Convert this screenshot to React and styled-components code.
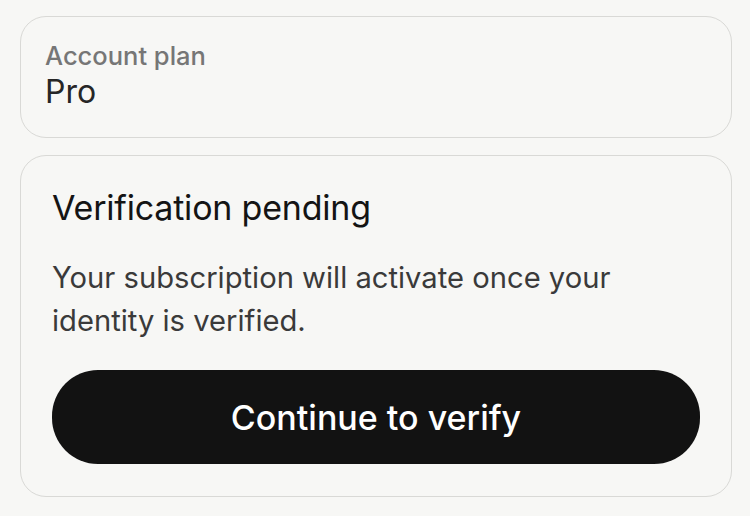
import styled, { createGlobalStyle } from "styled-components";

const GlobalStyle = createGlobalStyle`
  body {
    margin: 0;
    background: #f7f7f5;
    font-family: Inter, "Noto Sans", sans-serif;
  }
`;

const Page = styled.div`
  display: flex;
  flex-direction: column;
  gap: 17px;
  padding: 16px 18px 20px 20px;
`;

const Card = styled.div`
  border: 1px solid #d9d9d6;
  border-radius: 26px;
  background: #f7f7f5;
  padding: ${({ $padding }) => $padding};
  display: flex;
  flex-direction: column;
`;

const Label = styled.div`
  font-size: 25.5px;
  line-height: 30px;
  color: #767676;
  font-weight: 500;
`;

const Value = styled.div`
  font-size: 32px;
  line-height: 42px;
  color: #262626;
`;

const Title = styled.h2`
  margin: 0;
  font-size: 34px;
  font-weight: 400;
  line-height: 40px;
  color: #141414;
  letter-spacing: -0.2px;
`;

const Body = styled.p`
  margin: 28px 0 0;
  max-width: 600px;
  font-size: 29.2px;
  line-height: 43px;
  color: #3a3a3a;
`;

const Button = styled.button`
  margin-top: 28px;
  height: 94px;
  border: none;
  border-radius: 46px;
  background: #121212;
  color: #fff;
  font-family: inherit;
  font-size: 34px;
  font-weight: 500;
  cursor: pointer;
`;

export default function App() {
  return (
    <>
      <GlobalStyle />
      <Page>
        <Card $padding="24px 24px 24px">
          <Label>Account plan</Label>
          <Value>Pro</Value>
        </Card>
        <Card $padding="32px 31px 32px 31px">
          <Title>Verification pending</Title>
          <Body>
            Your subscription will activate once your identity is verified.
          </Body>
          <Button>Continue to verify</Button>
        </Card>
      </Page>
    </>
  );
}
